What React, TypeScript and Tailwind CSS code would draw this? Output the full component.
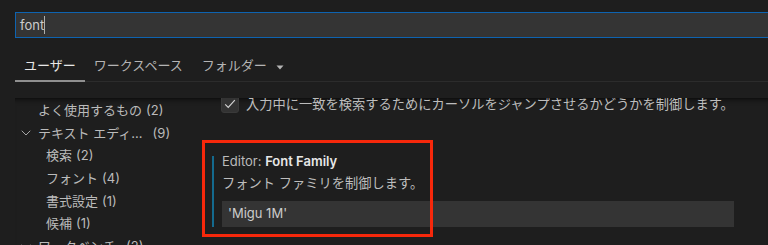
import React from "react";
import { ChevronDown } from "lucide-react";

const font = { fontFamily: '"Inter", "Noto Sans CJK JP", sans-serif' };

function TocRow({ level, label, count, chevron }: { level: number; label: string; count: string; chevron?: boolean }) {
  return (
    <div
      className={`flex items-center h-[22.67px] text-[13px] text-[#bbbbbb] whitespace-nowrap ${
        chevron ? "pl-[3px]" : level === 1 ? "pl-[23px]" : "pl-[31px]"
      }`}
    >
      {chevron && <ChevronDown size={16} strokeWidth={1.3} className="mr-[4px] text-[#bbbbbb]" />}
      <span>{label}</span>
      <span className={chevron ? "ml-[10px]" : "ml-[4px]"}>{count}</span>
    </div>
  );
}

export default function App() {
  return (
    <div className="w-full h-[245px] overflow-hidden bg-[#1e1e1e] pl-[15px] pt-[12px]" style={font}>
      {/* search */}
      <div className="w-[calc(100%+6px)] h-[26px] border border-[#0e63b0] bg-[#343434] flex items-center pl-[4px]">
        <span className="text-[13px] text-[#cccccc] leading-none">font</span>
        <span className="w-[1px] h-[18px] bg-[#aeafad]" />
      </div>

      {/* tabs */}
      <div className="mt-[12px] flex items-end border-b border-[#2c2c2c]">
        <div className="h-[31px] px-[9px] flex items-center text-[13px] text-[#e7e7e7] border-b-2 border-[#8f8f8f] -mb-[1px] pt-[1px]">
          ユーザー
        </div>
        <div className="h-[31px] px-[9px] flex items-center text-[13px] text-[#b4b4b4]">ワークスペース</div>
        <div className="h-[31px] px-[10px] flex items-center text-[13px] text-[#b4b4b4]">
          フォルダー
          <svg width="8" height="5" viewBox="0 0 8 5" className="ml-[9px] mt-[3px]">
            <path d="M0.5 0.5 L7.5 0.5 L4 4.5 Z" fill="#b4b4b4" />
          </svg>
        </div>
      </div>

      {/* body */}
      <div className="mt-[16px] flex h-[160px] shadow-[inset_0_6px_6px_-6px_#000000] overflow-hidden">
        <div className="w-[175px] shrink-0 pt-[1.5px]">
          <TocRow level={1} label="よく使用するもの" count="(2)" />
          <TocRow level={1} label="テキスト エディ..." count="(9)" chevron />
          <TocRow level={2} label="検索" count="(2)" />
          <TocRow level={2} label="フォント" count="(4)" />
          <TocRow level={2} label="書式設定" count="(1)" />
          <TocRow level={2} label="候補" count="(1)" />
          <TocRow level={1} label="ワークベンチ" count="(2)" chevron />
        </div>

        <div className="flex-1 pr-[34px] -mt-[3px]">
          <div className="ml-[31px] flex items-center">
            <div className="w-[18px] h-[18px] rounded-[3px] bg-[#333333] border border-[#3a3a3a] flex items-center justify-center">
              <svg width="14" height="14" viewBox="0 0 16 16">
                <path d="M2.5 8.5 L6 12 L13.5 3.5" fill="none" stroke="#d4d4d4" strokeWidth="1.3" />
              </svg>
            </div>
            <span className="ml-[7px] text-[13.25px] text-[#bdbdbd] whitespace-nowrap leading-[18px]">
              入力中に一致を検索するためにカーソルをジャンプさせるかどうかを制御します。
            </span>
          </div>

          <div className="relative ml-[22px] mt-[39px] flex">
            <div className="w-[2px] mt-[4px] bg-[#146a8e] shrink-0" />
            <div className="ml-[8px] flex-1">
              <div className="text-[13px] leading-[18px] whitespace-nowrap">
                <span className="text-[#bbbbbb]">Editor: </span>
                <span className="text-[#e7e7e7] font-semibold">Font Family</span>
              </div>
              <div className="mt-[4px] text-[13.25px] leading-[18px] text-[#bdbdbd] whitespace-nowrap">
                フォント ファミリを制御します。
              </div>
              <div className="mt-[9px] h-[26px] bg-[#343434] flex items-center pl-[6px] text-[13px] text-[#cccccc]">
                'Migu 1M'
              </div>
            </div>
            <div className="absolute left-[-10px] top-[-12px] w-[231px] h-[97px] border-[3px] border-[#f7280b] pointer-events-none" />
          </div>
        </div>
      </div>
    </div>
  );
}
